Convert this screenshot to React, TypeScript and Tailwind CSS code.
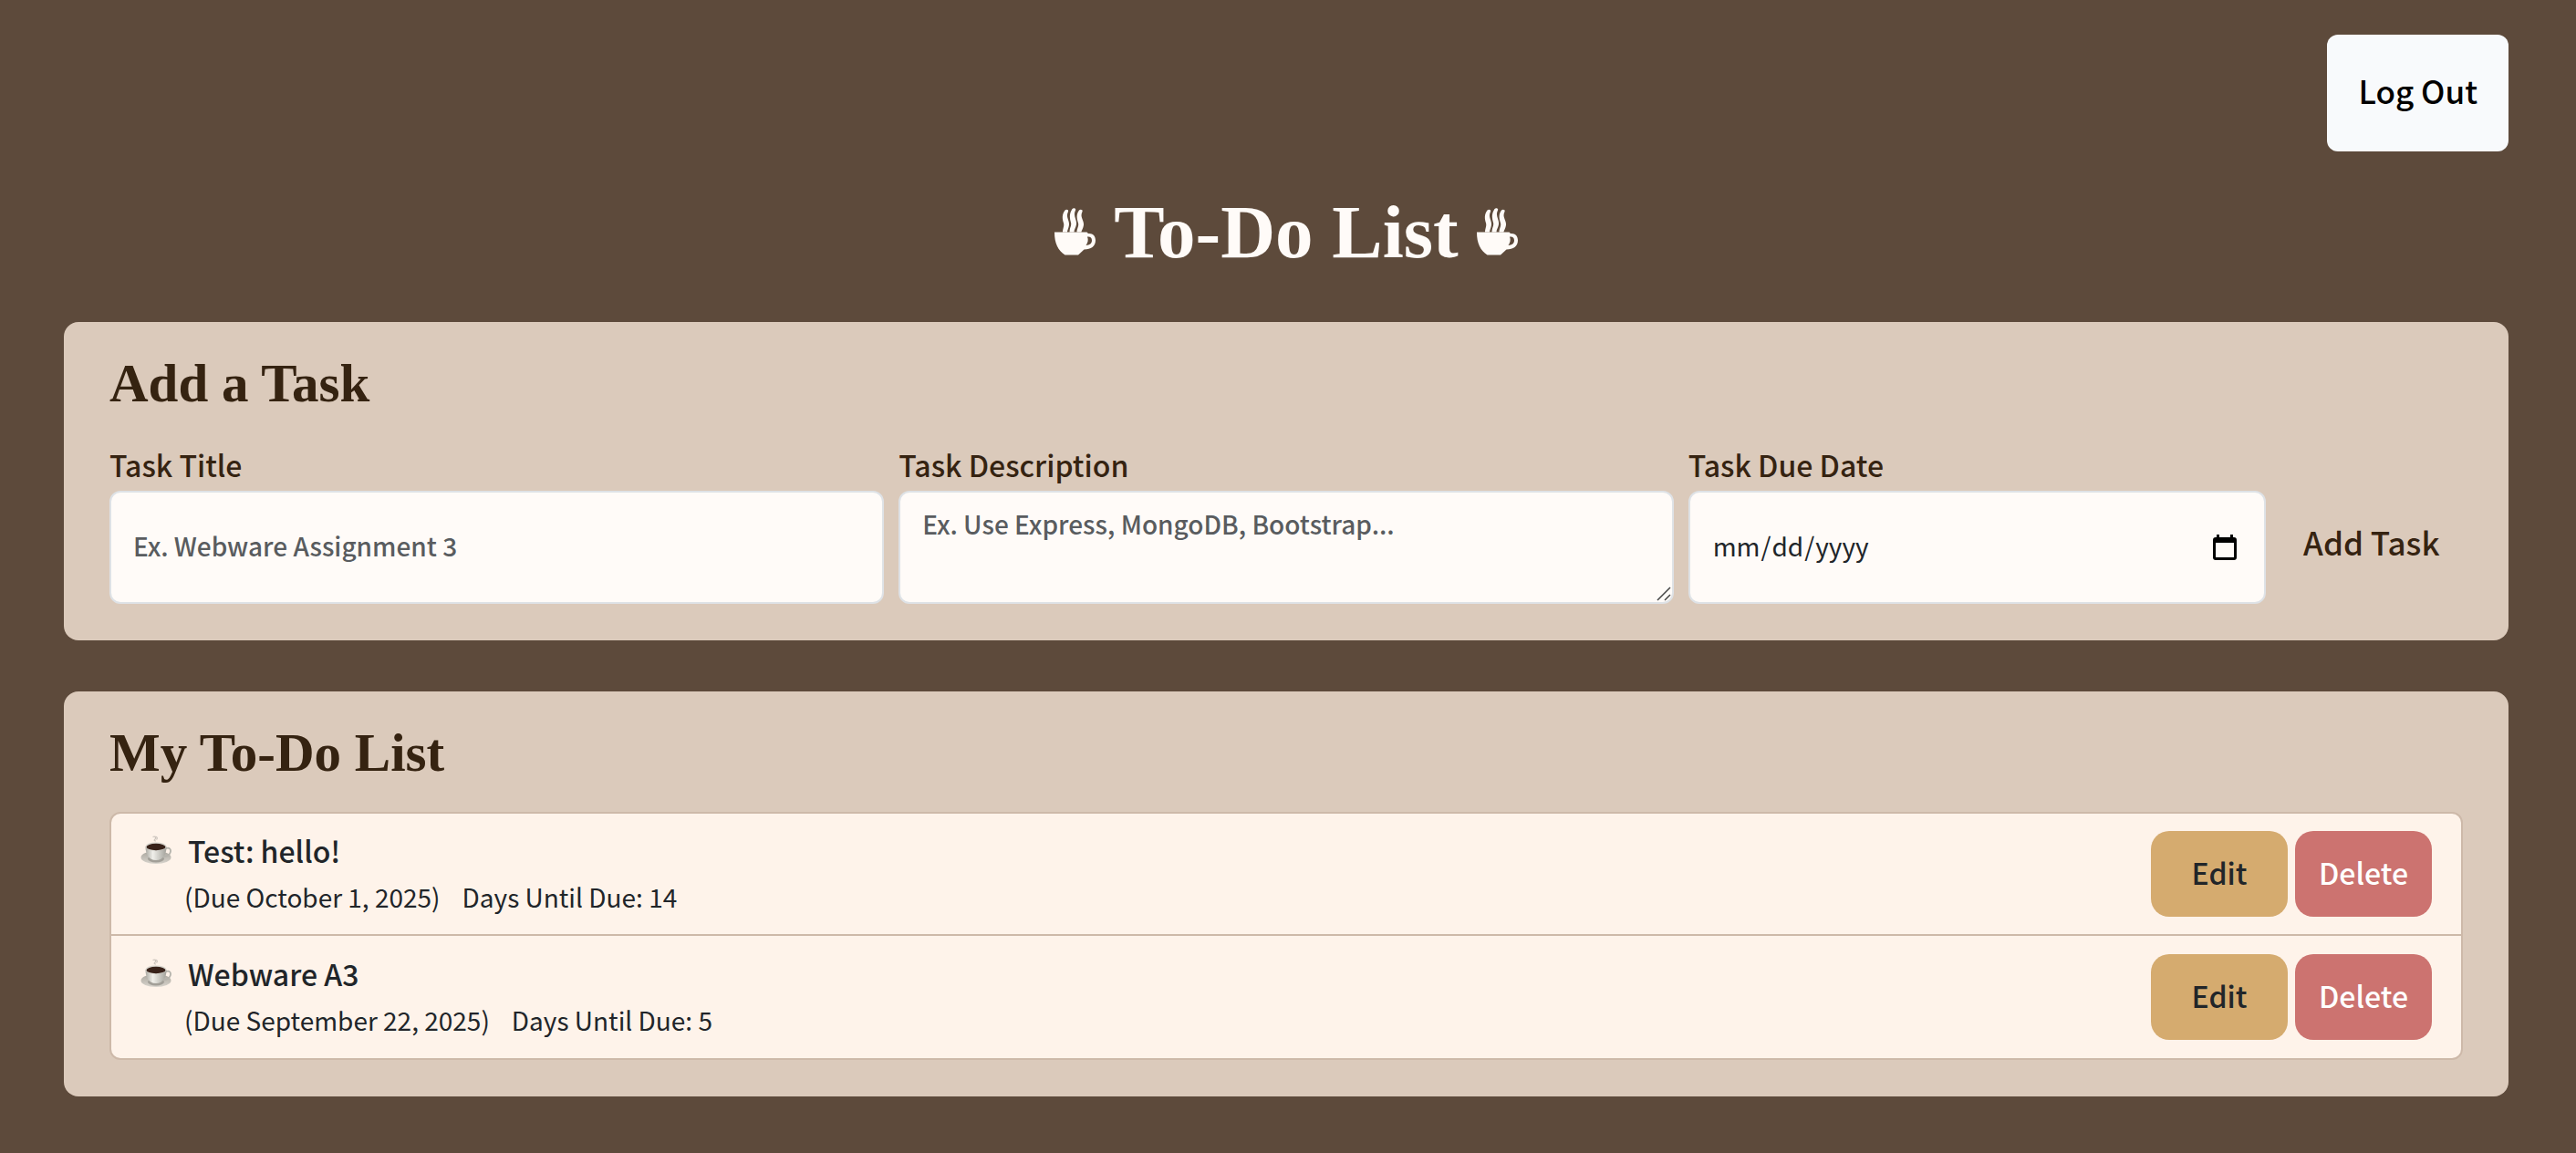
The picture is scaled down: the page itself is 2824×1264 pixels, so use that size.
import React from "react";

const tasks = [
  { title: "Test: hello!", due: "October 1, 2025", days: 14 },
  { title: "Webware A3", due: "September 22, 2025", days: 5 },
];

function SteamingCup() {
  return (
    <svg viewBox="0 0 45 52" className="h-[52px] w-[45px]" fill="currentColor" aria-hidden="true">
      <path d="M11.500 2.500c1.500-1.500 4.500-.5 3.500 1.500-3.500 7 3 10 .5 17-.8 2.500-1.500 4-1.500 5.500H9c0-4 2-6.500 1-10-1.500-5-2-9 1.500-14z" />
      <path d="M19.500 1c1.500-1.500 4.500-.5 3.500 1.500-3.500 7 3 10.500.5 17.500-.8 2.500-2 4-2 6.500h-5c0-5 2.500-7 1.500-10.500-1.500-5-2-9.500 1.500-15z" />
      <path d="M27 2.500c1.500-1.500 4.500-.5 3.500 1.500-3.500 7 3.500 10 1 17-.8 2.500-2 4-2 5.500h-5c0-4 2.500-6.500 1.500-10-1.500-5-2.500-9 1-14z" />
      <path
        fillRule="evenodd"
        d="M0 26.500h35.500l1.500 1.500c5-.5 8 2.500 8 7.500 0 6.500-5 10-12.500 10L26 51.500H11.500C4 46.500 0 39 0 26.500zM36 31.500c1.500 3.500.5 6.500-1.500 9.500 4-.5 6.500-2 6.500-5.500 0-3-2-4.500-5-4z"
      />
    </svg>
  );
}

function CoffeeCup() {
  return (
    <svg viewBox="0 0 34 32" className="h-8 w-[34px]" aria-hidden="true">
      <defs>
        <linearGradient id="cup" x1="0" x2="1" y1="0" y2="0">
          <stop offset="0" stopColor="#aaa9a2" />
          <stop offset="0.35" stopColor="#f0efea" />
          <stop offset="1" stopColor="#a3a29b" />
        </linearGradient>
        <linearGradient id="saucer" x1="0" x2="0" y1="0" y2="1">
          <stop offset="0" stopColor="#aaa69e" />
          <stop offset="1" stopColor="#d8d4cd" />
        </linearGradient>
      </defs>
      <path d="M13.500 1.500c3-1 4 1 2.500 2.500s-1 2 1 2M16.500 1c2 .5 2.500 2 1 3.500" fill="none" stroke="#cdc5be" strokeWidth="1.200" />
      <ellipse cx="17" cy="24" rx="16.500" ry="7" fill="url(#saucer)" />
      <ellipse cx="17" cy="25.500" rx="9" ry="4" fill="#a29f98" />
      <path d="M27 14.500c5-2.500 7 1 5.500 4.500-1 2.500-3.500 4-7 4" fill="none" stroke="#b5b3ac" strokeWidth="1.800" />
      <path d="M5.500 12c0 8 3 15 11.500 15s11.500-7 11.500-15z" fill="url(#cup)" />
      <ellipse cx="17" cy="12" rx="11.500" ry="4.500" fill="#d5d3cc" />
      <ellipse cx="17" cy="12.500" rx="10.500" ry="3.700" fill="#38221a" />
    </svg>
  );
}

function CalendarIcon() {
  return (
    <svg viewBox="0 0 26 28" className="pointer-events-none absolute right-8 bottom-12 h-7 w-[26px]" aria-hidden="true">
      <path fillRule="evenodd" d="M4 0h3v3h12V0h3v3h1a3 3 0 0 1 3 3v19a3 3 0 0 1-3 3H3a3 3 0 0 1-3-3V6a3 3 0 0 1 3-3h1zM3 9v16h20V9z" />
    </svg>
  );
}

function ResizeGrip() {
  return (
    <svg viewBox="0 0 16 16" className="pointer-events-none absolute right-[3px] bottom-[3px] size-4" aria-hidden="true">
      <path d="M1 15L15 1M9 15l6-6" stroke="#444" strokeWidth="1.500" />
    </svg>
  );
}

const field =
  "block h-[124px] w-full rounded-xl border-2 border-[#dee2e6] bg-[#fffbf8] px-6 pt-2.5 pb-3.5 text-[28px] leading-[48px] text-[#212529] placeholder:text-[#595c5f] placeholder:opacity-100";
const label = "block text-[32px] leading-[58px]";
const heading = "font-['Liberation_Serif',serif] text-[59px] font-bold leading-[70px]";

export default function App() {
  return (
    <main className="min-h-screen bg-[#5d4a3b] pl-[70px] pr-[74px] pt-[38px] pb-[62px] font-['Noto_Sans_CJK_JP',sans-serif] font-medium text-[#352311]">
      <header>
        <div className="flex justify-end">
          <button type="button" className="h-32 rounded-xl bg-[#f8fafc] px-[34px] pb-1.5 text-[35px] text-black">
            Log Out
          </button>
        </div>
        <h1 className="mt-10 flex h-24 items-center justify-center gap-5 font-['Liberation_Serif',serif] text-[83px] font-bold leading-[96px] text-[#fffbf8]">
          <SteamingCup />
          To-Do List
          <SteamingCup />
        </h1>
      </header>

      <section className="mt-[51px] rounded-2xl bg-[#dbcabb] px-[50px] pt-8 pb-10">
        <h2 className={heading}>Add a Task</h2>
        <form className="mt-[25px] grid grid-cols-12 items-end gap-4" onSubmit={(e) => e.preventDefault()}>
          <div className="col-span-4">
            <label htmlFor="title" className={label}>Task Title</label>
            <input id="title" type="text" placeholder="Ex. Webware Assignment 3" className={field} />
          </div>
          <div className="relative col-span-4">
            <label htmlFor="description" className={label}>Task Description</label>
            <textarea
              id="description"
              placeholder="Ex. Use Express, MongoDB, Bootstrap..."
              className={`${field} [&::-webkit-resizer]:appearance-none [&::-webkit-resizer]:bg-transparent`}
            />
            <ResizeGrip />
          </div>
          <div className="relative col-span-3">
            <label htmlFor="due" className={label}>Task Due Date</label>
            <input id="due" type="date" className={`${field} font-normal [&::-webkit-calendar-picker-indicator]:opacity-0`} />
            <CalendarIcon />
          </div>
          <button type="submit" className="h-32 pb-2 text-[35px] whitespace-nowrap">Add Task</button>
        </form>
      </section>

      <section className="mt-14 rounded-2xl bg-[#dbcabb] px-[50px] pt-8 pb-10">
        <h2 className={heading}>My To-Do List</h2>
        <ul className="mt-[30px] divide-y-2 divide-[#cdb9a9] overflow-hidden rounded-xl border-2 border-[#cdb9a9] bg-[#fef3ea] text-[#212529]">
          {tasks.map((task) => (
            <li key={task.title} className="flex h-[134px] items-center justify-between px-8">
              <div className="pb-1">
                <div className="flex items-center gap-[18px] text-[32px] leading-[54px]">
                  <CoffeeCup />
                  <span>{task.title}</span>
                </div>
                <div className="flex gap-6 pl-12 text-[28px] font-normal leading-[48px]">
                  <span>(Due {task.due})</span>
                  <span>Days Until Due: {task.days}</span>
                </div>
              </div>
              <div className="flex gap-2 text-[32px]">
                <button type="button" className="h-[94px] w-[150px] rounded-[20px] bg-[#d5ab6f] pb-1">Edit</button>
                <button type="button" className="h-[94px] w-[150px] rounded-[20px] bg-[#cc7370] pb-1 text-white">Delete</button>
              </div>
            </li>
          ))}
        </ul>
      </section>
    </main>
  );
}
